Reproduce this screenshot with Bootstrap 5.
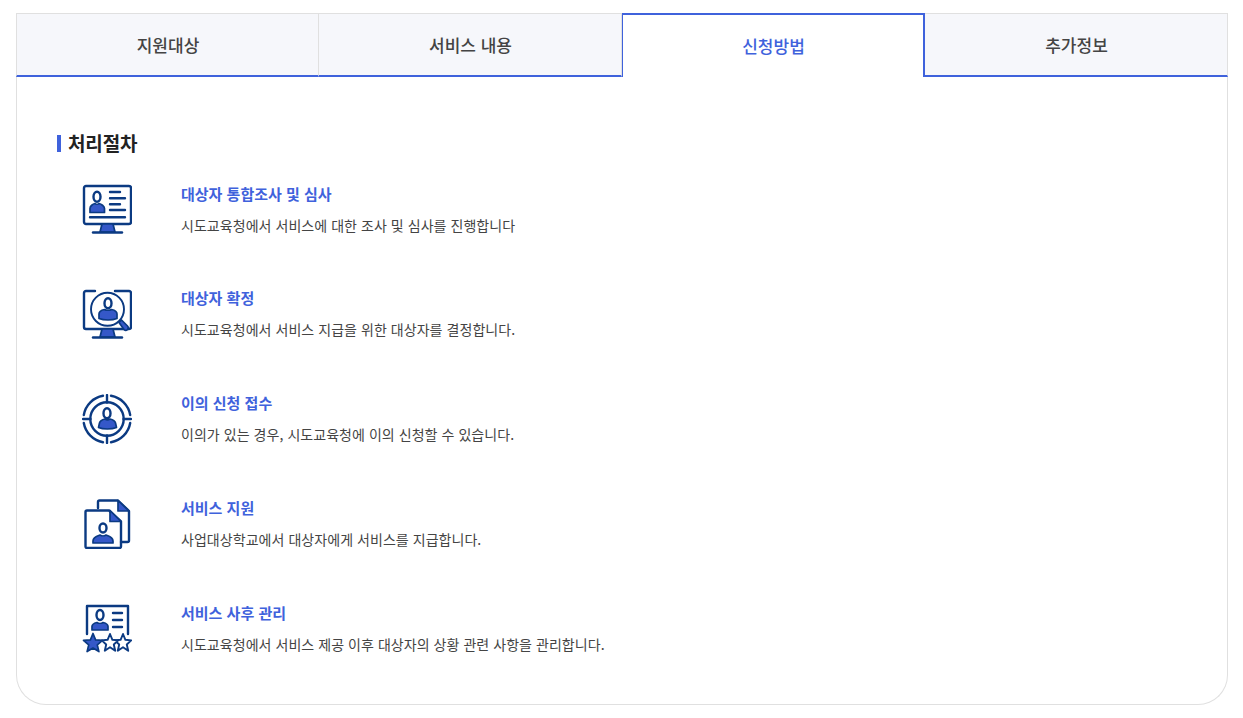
<!DOCTYPE html>
<html lang="ko">
<head>
<meta charset="utf-8">
<title>신청방법</title>
<link rel="stylesheet" href="https://cdn.jsdelivr.net/npm/bootstrap@5.3.0/dist/css/bootstrap.min.css">
<style>
body{font-family:"Noto Sans CJK KR","Noto Sans",sans-serif;background:#fff;color:#333}
.shell{margin:13px 15px 0 16px;height:692px;border:1px solid #e0e0e0;border-top:0;border-radius:0 0 30px 30px}
.tabbar{margin:0 -1px;height:64px}
.tabitem{width:25%;height:64px;padding-left:1px;background:#f6f7fb;border-top:1px solid #e0e0e0;border-right:1px solid #e0e0e0;border-bottom:2px solid #3f62dc;font-size:17px;font-weight:500;color:#444;line-height:62px;text-align:center}
.tabitem:first-child{border-left:1px solid #e0e0e0}
.tabitem.current{background:#fff;border:2px solid #3f62dc;border-width:2px 2px 0 1px;color:#3f62dc;line-height:62px}
.tabbody{padding:53px 40px 0}
.sect-title{font-size:19px;font-weight:700;color:#222;line-height:26px;margin:0 0 28px;padding-left:11px;position:relative;letter-spacing:-.15px}
.sect-title::before{content:"";position:absolute;left:0;top:5px;width:4px;height:17px;background:#3f62dc}
.step{height:105px;padding-left:25px;gap:49px}
.step svg{width:50px;height:50px;flex:none}
.step-body{margin-top:-1px}
.step:first-of-type .step-body{margin-top:0}
.step-title{font-size:15px;font-weight:700;color:#3f62dc;line-height:20px;margin:0 0 10px}
.step-text{font-size:14px;color:#444;line-height:22px;margin:0;font-weight:400;letter-spacing:.05px}
.ln{fill:none;stroke:#0b3a82;stroke-width:2.4;stroke-linecap:round;stroke-linejoin:round}
.wh{fill:#fff;stroke:#0b3a82;stroke-width:1.9;stroke-linejoin:round}
.fl{fill:#3558c8;stroke:#0b3a82;stroke-width:1.7;stroke-linejoin:round}
</style>
</head>
<body>
<div class="shell">
  <div class="tabbar d-flex">
    <div class="tabitem">지원대상</div>
    <div class="tabitem">서비스 내용</div>
    <div class="tabitem current">신청방법</div>
    <div class="tabitem">추가정보</div>
  </div>
  <div class="tabbody">
    <h3 class="sect-title">처리절차</h3>

    <div class="step d-flex align-items-start">
      <svg viewBox="0 0 50 50">
        <rect class="ln" x="2" y="2" width="47" height="38" rx="2"/>
        <ellipse class="ln" cx="15" cy="12.700" rx="3.500" ry="5"/>
        <path class="fl" d="M8 28.500v-4c0-2.500 3-4.500 5-5 1 1 3 1 4 0 2 .5 5.500 2.500 5.500 5v4z"/>
        <path class="ln" d="M28 8h10M28 14.300h15M28 20.300h10M28 26h15M8 33.300h35"/>
        <path class="fl" d="M20 40h11l2 8H18z"/>
        <path class="ln" d="M11 48.500h29"/>
      </svg>
      <div class="step-body">
        <p class="step-title">대상자 통합조사 및 심사</p>
        <p class="step-text">시도교육청에서 서비스에 대한 조사 및 심사를 진행합니다</p>
      </div>
    </div>

    <div class="step d-flex align-items-start">
      <svg viewBox="0 0 50 50">
        <path class="ln" d="M13 2H4a2 2 0 0 0-2 2v34a2 2 0 0 0 2 2h43a2 2 0 0 0 2-2V4a2 2 0 0 0-2-2H33"/>
        <circle class="wh" cx="25.500" cy="20.300" r="16.500"/>
        <ellipse class="ln" cx="26" cy="14.300" rx="3.500" ry="5"/>
        <path class="fl" d="M17 29.500v-4.500c0-2.500 3-4 5.500-4.500 1.500 1 5.500 1 7 0 2.500.5 5.500 2 5.500 4.500v4.500c-5 2-13 2-18 0z"/>
        <path class="fl" d="M37 33.500l2.500-2.500 6 6c1 1 1 2.500 0 3.500s-2.500 1-3.500 0z"/>
        <path class="fl" d="M20 40h11l2 8H18z"/>
        <path class="ln" d="M11 48.500h29"/>
      </svg>
      <div class="step-body">
        <p class="step-title">대상자 확정</p>
        <p class="step-text">시도교육청에서 서비스 지급을 위한 대상자를 결정합니다.</p>
      </div>
    </div>

    <div class="step d-flex align-items-start">
      <svg viewBox="0 0 50 50">
        <path class="ln" d="M21 1.800A23.500 23.500 0 0 0 1.800 21M29 1.800A23.500 23.500 0 0 1 48.200 21M48.200 29A23.500 23.500 0 0 1 29 48.200M21 48.200A23.500 23.500 0 0 1 1.800 29"/>
        <circle class="ln" cx="25" cy="25" r="16.700"/>
        <path class="ln" d="M25 1v7.500M25 41.500V49M1 25h7.500M41.500 25H49"/>
        <ellipse class="ln" cx="25" cy="19.300" rx="3.500" ry="5"/>
        <path class="fl" d="M16.500 33.500l1-4.500c.5-2 3.500-3.500 5.500-4 1.500 1 3.500 1 5 0 2 .5 5 2 5.500 4l1 4.500c-5 2-13.500 2-18 0z"/>
      </svg>
      <div class="step-body">
        <p class="step-title">이의 신청 접수</p>
        <p class="step-text">이의가 있는 경우, 시도교육청에 이의 신청할 수 있습니다.</p>
      </div>
    </div>

    <div class="step d-flex align-items-start">
      <svg viewBox="0 0 50 50">
        <path class="ln" d="M16 9V3a1.500 1.500 0 0 1 1.500-1.500H36L47 12v29.500a1.500 1.500 0 0 1-1.500 1.500H39"/>
        <path class="fl" d="M36 1.500V12h11z"/>
        <path class="ln" d="M5 11.500h22L39 22.500v25a1.500 1.500 0 0 1-1.500 1.500H5a1.500 1.500 0 0 1-1.500-1.500V13A1.500 1.500 0 0 1 5 11.500z"/>
        <path class="fl" d="M28 11.500V22.500h11z"/>
        <ellipse class="ln" cx="21" cy="29" rx="3.500" ry="4.500"/>
        <path class="fl" d="M11 44v-2c0-4 4-5 7-6 1.500 1 4.500 1 6 0 3 1 7 2 7 6v2z"/>
      </svg>
      <div class="step-body">
        <p class="step-title">서비스 지원</p>
        <p class="step-text">사업대상학교에서 대상자에게 서비스를 지급합니다.</p>
      </div>
    </div>

    <div class="step d-flex align-items-start">
      <svg viewBox="0 0 50 50">
        <path class="ln" d="M5 30V2h41v28"/>
        <ellipse class="ln" cx="18" cy="11" rx="3.500" ry="5"/>
        <path class="fl" d="M10 26v-3.500c0-2 3-3.500 5-4 1.500 1 4.500 1 6 0 2 .5 5 2 5 4V26z"/>
        <path class="ln" d="M31 9h9M31 16h9M31 23h9"/>
        <polygon class="wh" points="41,30 43.400,35.800 49.200,36.400 44.800,40.500 46.200,46.800 41,43.300 35.800,46.800 37.200,40.500 32.800,36.400 38.600,35.800"/>
        <polygon class="wh" points="28,30 30.400,35.800 36.200,36.400 31.800,40.500 33.200,46.800 28,43.300 22.800,46.800 24.200,40.500 19.800,36.400 25.600,35.800"/>
        <polygon class="fl" points="11,29.500 13.600,35.900 20.500,36.400 15.300,40.900 16.900,47.600 11,44 5.100,47.600 6.700,40.900 1.500,36.400 8.400,35.900"/>
      </svg>
      <div class="step-body">
        <p class="step-title">서비스 사후 관리</p>
        <p class="step-text">시도교육청에서 서비스 제공 이후 대상자의 상황 관련 사항을 관리합니다.</p>
      </div>
    </div>
  </div>
</div>
</body>
</html>
